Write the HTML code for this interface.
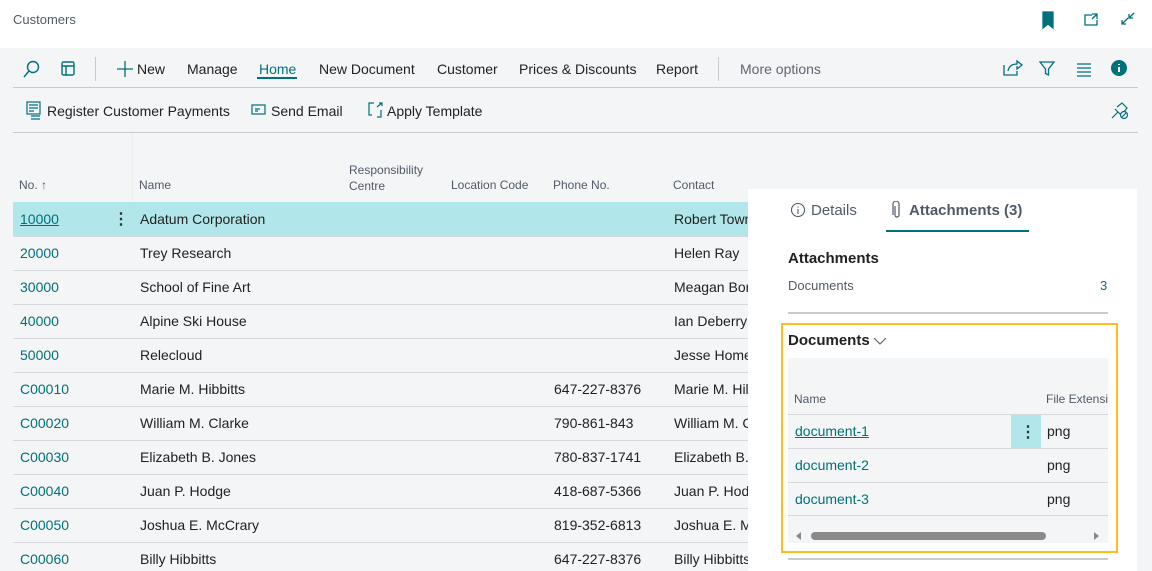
<!DOCTYPE html>
<html><head><meta charset="utf-8"><style>
*{margin:0;padding:0;box-sizing:border-box}
body{width:1152px;height:571px;overflow:hidden;background:#f4f5f7;font-family:"Liberation Sans",sans-serif;font-size:14px;color:#212121;position:relative}
.a{position:absolute;white-space:nowrap}
.t{color:#00707a}
.hl{position:absolute;height:1px;background:#d6d8dc}
</style></head><body>
<div class="a" style="left:0;top:0;width:1152px;height:48px;background:#fff"></div>
<div class="a" style="left:13px;top:12px;font-size:13px;color:#505a66">Customers</div>
<svg class="a" style="left:1040px;top:11px" width="100" height="20" fill="none" stroke="#00707a" stroke-width="1.3">
<path d="M3 1h10v16l-5-4-5 4z" fill="#00707a"/>
<path d="M52 4h-7v10h12v-5M52 3h5v5M57 3l-5 5"/>
<path d="M82 13l6-6M82 9v4h4M94 2l-5 5M89 3v4h4"/>
</svg>
<svg class="a" style="left:22px;top:60px" width="60" height="20" fill="none" stroke="#00707a" stroke-width="1.4">
<circle cx="11" cy="7" r="5.5"/><path d="M7 11l-5 6"/>
<rect x="40" y="2" width="12" height="13" rx="1.5"/><path d="M40 6h12M44 6v9"/>
</svg>
<div class="a" style="left:95px;top:57px;width:1px;height:24px;background:#c8cacd"></div>
<svg class="a" style="left:116px;top:60px" width="18" height="18" fill="none" stroke="#00707a" stroke-width="1.3"><path d="M9 1v16M1 9h16"/></svg>
<div class="a" style="left:137px;top:61px">New</div>
<div class="a" style="left:187px;top:61px">Manage</div>
<div class="a t" style="left:259px;top:61px">Home</div>
<div class="a" style="left:257px;top:77px;width:40px;height:2px;background:#00707a"></div>
<div class="a" style="left:319px;top:61px">New Document</div>
<div class="a" style="left:437px;top:61px">Customer</div>
<div class="a" style="left:519px;top:61px">Prices &amp; Discounts</div>
<div class="a" style="left:656px;top:61px">Report</div>
<div class="a" style="left:718px;top:57px;width:1px;height:24px;background:#c8cacd"></div>
<div class="a" style="left:740px;top:61px;color:#5f6670">More options</div>
<svg class="a" style="left:1002px;top:59px" width="130" height="20" fill="none" stroke="#00707a" stroke-width="1.3">
<path d="M2 6v10h13v-4M6 12c1-5 4-7 9-7V2l5 4-5 4V7"/>
<path d="M38 3h14l-5.5 7v6l-3-1.5V10z"/>
<path d="M75 5h14M75 9h14M75 13h14M75 17h14"/>
<circle cx="117" cy="9" r="8" fill="#00707a" stroke="none"/><path d="M117 8v5M117 5v1" stroke="#fff" stroke-width="2"/>
</svg>
<div class="hl" style="left:13px;top:87px;width:1125px;background:#c8cacd"></div>
<svg class="a" style="left:26px;top:101px" width="240" height="20" fill="none" stroke="#00707a" stroke-width="1.2">
<rect x="1" y="1" width="13" height="12"/><path d="M3 4h9M3 7h9M3 10h5M5 15h9M5 18h9"/>
<rect x="226" y="4" width="13" height="9"/><path d="M229 8h5M229 10h3"/>
</svg>
<svg class="a" style="left:367px;top:101px" width="20" height="20" fill="none" stroke="#00707a" stroke-width="1.2"><path d="M7 2h-5v12h3M10 16h4v-7"/><path d="M10 6l5-4M12 2h3v3"/></svg>
<div class="a" style="left:47px;top:103px">Register Customer Payments</div>
<div class="a" style="left:271px;top:103px">Send Email</div>
<div class="a" style="left:387px;top:103px">Apply Template</div>
<svg class="a" style="left:1110px;top:101px" width="20" height="20" fill="none" stroke="#00707a" stroke-width="1.2"><path d="M2 17l6-6M5 8l7 7M7 6l5-4 5 5-4 5"/><circle cx="14" cy="14" r="3.5" fill="#f4f5f7"/><path d="M11.5 16.5l5-5"/></svg>
<div class="hl" style="left:13px;top:132px;width:1125px;background:#c8cacd"></div>
<div class="a" style="left:132px;top:133px;width:1px;height:68px;background:#eceef0"></div>
<div class="a" style="left:19px;top:178px;font-size:12px;color:#505a66">No. ↑</div>
<div class="a" style="left:139px;top:178px;font-size:12px;color:#505a66">Name</div>
<div class="a" style="left:349px;top:162px;font-size:12px;color:#505a66;line-height:16px">Responsibility<br>Centre</div>
<div class="a" style="left:451px;top:178px;font-size:12px;color:#505a66">Location Code</div>
<div class="a" style="left:553px;top:178px;font-size:12px;color:#505a66">Phone No.</div>
<div class="a" style="left:673px;top:178px;font-size:12px;color:#505a66">Contact</div>
<div class="a" style="left:13px;top:202px;width:735px;height:34px;background:#b1e7ea"></div>
<div class="a" style="left:113px;top:209px;font-size:16px;color:#333;font-weight:bold">⋮</div>
<div class="a t" style="left:20px;top:211px;text-decoration:underline">10000</div>
<div class="a" style="left:140px;top:211px">Adatum Corporation</div><div class="a" style="left:674px;top:211px">Robert Town</div>
<div class="hl" style="left:13px;top:236px;width:735px"></div>
<div class="a t" style="left:20px;top:245px">20000</div><div class="a" style="left:140px;top:245px">Trey Research</div><div class="a" style="left:674px;top:245px">Helen Ray</div>
<div class="hl" style="left:13px;top:270px;width:735px"></div>
<div class="a t" style="left:20px;top:279px">30000</div><div class="a" style="left:140px;top:279px">School of Fine Art</div><div class="a" style="left:674px;top:279px">Meagan Bor</div>
<div class="hl" style="left:13px;top:304px;width:735px"></div>
<div class="a t" style="left:20px;top:313px">40000</div><div class="a" style="left:140px;top:313px">Alpine Ski House</div><div class="a" style="left:674px;top:313px">Ian Deberry</div>
<div class="hl" style="left:13px;top:338px;width:735px"></div>
<div class="a t" style="left:20px;top:347px">50000</div><div class="a" style="left:140px;top:347px">Relecloud</div><div class="a" style="left:674px;top:347px">Jesse Home</div>
<div class="hl" style="left:13px;top:372px;width:735px"></div>
<div class="a t" style="left:20px;top:381px">C00010</div><div class="a" style="left:140px;top:381px">Marie M. Hibbitts</div><div class="a" style="left:554px;top:381px">647-227-8376</div><div class="a" style="left:674px;top:381px">Marie M. Hil</div>
<div class="hl" style="left:13px;top:406px;width:735px"></div>
<div class="a t" style="left:20px;top:415px">C00020</div><div class="a" style="left:140px;top:415px">William M. Clarke</div><div class="a" style="left:554px;top:415px">790-861-843</div><div class="a" style="left:674px;top:415px">William M. C</div>
<div class="hl" style="left:13px;top:440px;width:735px"></div>
<div class="a t" style="left:20px;top:449px">C00030</div><div class="a" style="left:140px;top:449px">Elizabeth B. Jones</div><div class="a" style="left:554px;top:449px">780-837-1741</div><div class="a" style="left:674px;top:449px">Elizabeth B.</div>
<div class="hl" style="left:13px;top:474px;width:735px"></div>
<div class="a t" style="left:20px;top:483px">C00040</div><div class="a" style="left:140px;top:483px">Juan P. Hodge</div><div class="a" style="left:554px;top:483px">418-687-5366</div><div class="a" style="left:674px;top:483px">Juan P. Hod</div>
<div class="hl" style="left:13px;top:508px;width:735px"></div>
<div class="a t" style="left:20px;top:517px">C00050</div><div class="a" style="left:140px;top:517px">Joshua E. McCrary</div><div class="a" style="left:554px;top:517px">819-352-6813</div><div class="a" style="left:674px;top:517px">Joshua E. M</div>
<div class="hl" style="left:13px;top:542px;width:735px"></div>
<div class="a t" style="left:20px;top:551px">C00060</div><div class="a" style="left:140px;top:551px">Billy Hibbitts</div><div class="a" style="left:554px;top:551px">647-227-8376</div><div class="a" style="left:674px;top:551px">Billy Hibbitts</div>
<div class="a" style="left:748px;top:189px;width:389px;height:382px;background:#fff"></div>
<svg class="a" style="left:790px;top:202px" width="16" height="16" fill="none" stroke="#505a66" stroke-width="1.1"><circle cx="8" cy="8" r="6.5"/><path d="M8 7v5M8 4.5v1"/></svg>
<div class="a" style="left:811px;top:202px;font-size:15px;color:#505a66">Details</div>
<svg class="a" style="left:891px;top:201px" width="12" height="18" fill="none" stroke="#505a66" stroke-width="1.2"><path d="M4 5v9a2 2 0 004 0V3a3 3 0 00-6 0v11"/></svg>
<div class="a" style="left:909px;top:202px;font-size:15px;font-weight:bold;color:#505a66">Attachments (3)</div>
<div class="a" style="left:886px;top:230px;width:143px;height:2px;background:#00707a"></div>
<div class="a" style="left:788px;top:250px;font-size:15px;font-weight:bold">Attachments</div>
<div class="a" style="left:788px;top:278px;font-size:13px;color:#505a66">Documents</div>
<div class="a t" style="left:1100px;top:278px;font-size:13px">3</div>
<div class="a" style="left:788px;top:312px;width:320px;height:2px;background:#c8cacd"></div>
<div class="a" style="left:781px;top:323px;width:337px;height:230px;border:2px solid #fdbd1d"></div>
<div class="a" style="left:788px;top:332px;font-size:15px;font-weight:bold">Documents</div>
<svg class="a" style="left:873px;top:336px" width="14" height="10" fill="none" stroke="#505a66" stroke-width="1"><path d="M1 2l6 6 6-6"/></svg>
<div class="a" style="left:788px;top:358px;width:320px;height:185px;background:#f4f5f7"></div>
<div class="a" style="left:794px;top:392px;font-size:12px;color:#505a66">Name</div>
<div class="a" style="left:1046px;top:392px;font-size:12px;color:#505a66;width:62px;overflow:hidden">File Extension</div>
<div class="hl" style="left:788px;top:414px;width:320px"></div>
<div class="a" style="left:1011px;top:415px;width:30px;height:33px;background:#b1e7ea"></div>
<div class="a" style="left:1020px;top:422px;font-size:16px;font-weight:bold;color:#333">⋮</div>
<div class="a t" style="left:795px;top:423px;text-decoration:underline">document-1</div><div class="a" style="left:1047px;top:423px">png</div>
<div class="hl" style="left:788px;top:448px;width:320px"></div>
<div class="a t" style="left:795px;top:457px">document-2</div><div class="a" style="left:1047px;top:457px">png</div>
<div class="hl" style="left:788px;top:482px;width:320px"></div>
<div class="a t" style="left:795px;top:491px">document-3</div><div class="a" style="left:1047px;top:491px">png</div>
<div class="hl" style="left:788px;top:515px;width:320px"></div>
<div class="a" style="left:796px;top:532px;width:0;height:0;border:4px solid transparent;border-right:5px solid #888;border-left:0"></div>
<div class="a" style="left:811px;top:532px;width:235px;height:8px;border-radius:4px;background:#8a8a8a"></div>
<div class="a" style="left:1094px;top:532px;width:0;height:0;border:4px solid transparent;border-left:5px solid #888;border-right:0"></div>
<div class="a" style="left:788px;top:558px;width:320px;height:2px;background:#c8cacd"></div>
</body></html>
